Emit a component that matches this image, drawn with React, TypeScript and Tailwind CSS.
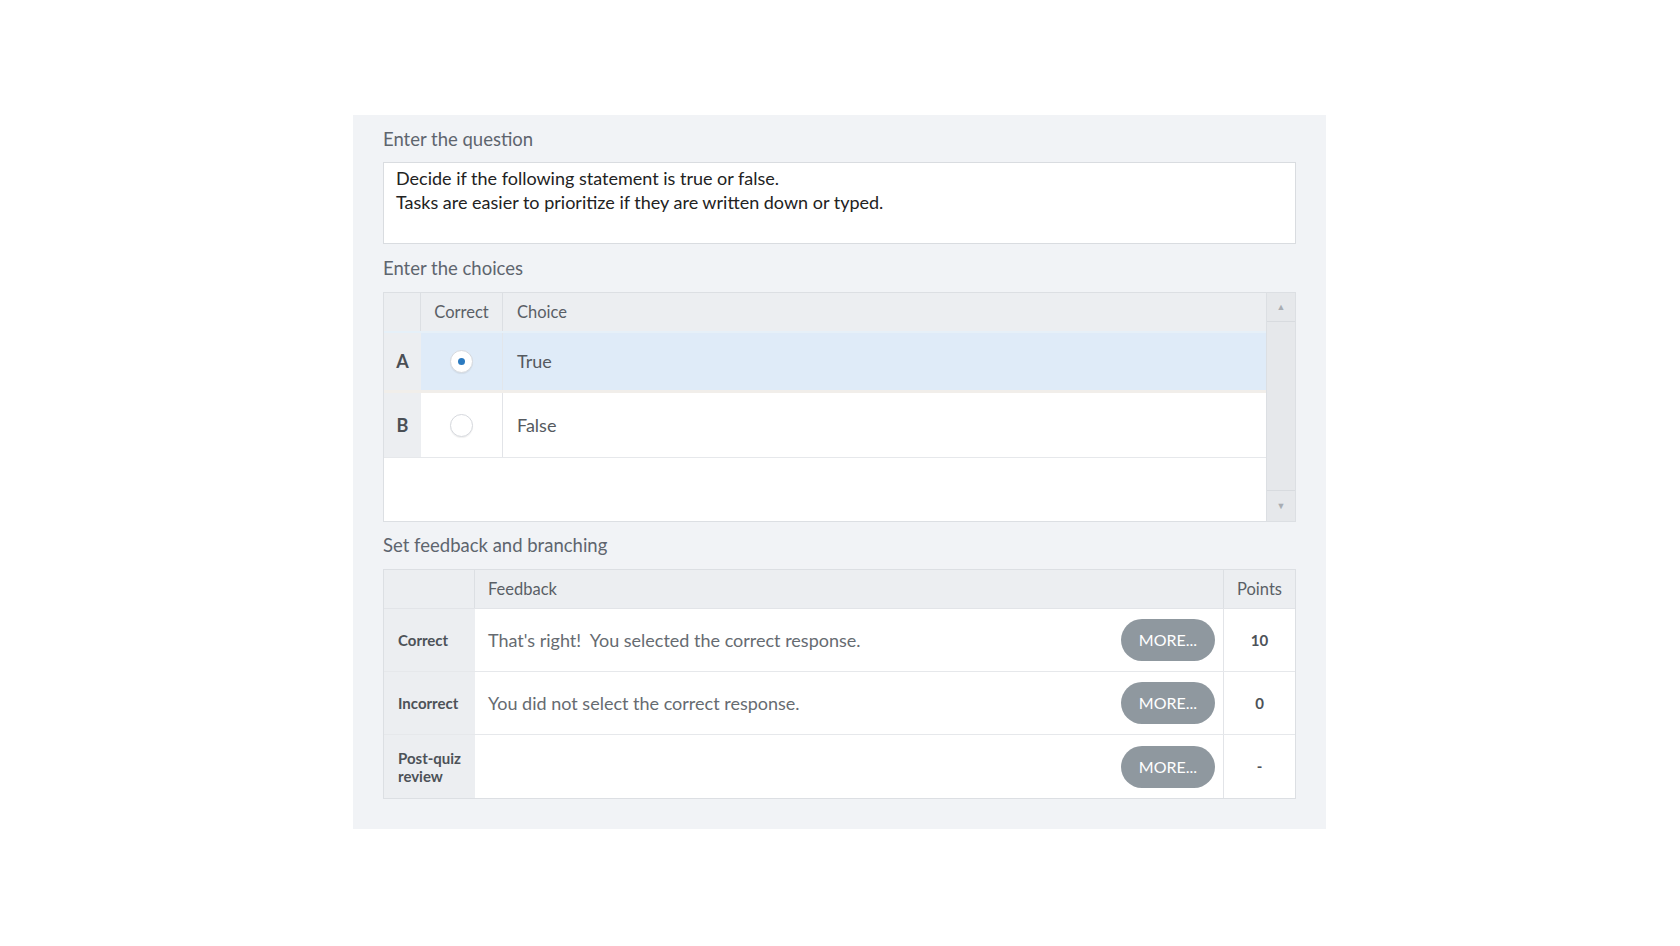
import React from "react";

const font = { fontFamily: "Lato, 'Open Sans', sans-serif" };

const choices = [
  { key: "A", label: "True", selected: true },
  { key: "B", label: "False", selected: false },
];

const feedback = [
  { label: "Correct", text: "That's right!\u00a0 You selected the correct response.", points: "10" },
  { label: "Incorrect", text: "You did not select the correct response.", points: "0" },
  { label: "Post-quiz review", text: "", points: "-" },
];

function Radio({ on }: { on: boolean }) {
  return (
    <span className="grid h-[23px] w-[23px] place-items-center rounded-full border border-[#d6d9de] bg-white shadow-[0_1px_1px_rgba(0,0,0,0.06)]">
      {on && <span className="h-[7px] w-[7px] rounded-full bg-[#2b7ac0]" />}
    </span>
  );
}

export default function App() {
  return (
    <div className="min-h-screen bg-white pl-[353px] pt-[115px]" style={font}>
      <div className="h-[714px] w-[973px] bg-[#f1f3f6] px-[30px] pt-[12px]">
        <div className="h-[24px] text-[18.5px] leading-[24px] text-[#5e656e]">Enter the question</div>
        <div className="mt-[11px] h-[82px] border border-[#d9dce0] bg-white px-[12px] pt-[3px] text-[18px] leading-[24px] text-[#222]">
          <div>Decide if the following statement is true or false.</div>
          <div>Tasks are easier to prioritize if they are written down or typed.</div>
        </div>

        <div className="mt-[12px] h-[24px] text-[18.5px] leading-[24px] text-[#5e656e]">Enter the choices</div>
        <div className="mt-[12px] flex h-[230px] border border-[#dcdfe3] bg-white">
          <div className="flex flex-1 flex-col">
            <div className="flex h-[40px] border-b-[2px] border-[#e6f0f8] bg-[#eceef1] text-[16.5px] text-[#5a5f66]">
              <div className="w-[37px] border-r border-[#dcdfe3]" />
              <div className="flex w-[82px] items-center justify-center border-r border-[#dcdfe3]">Correct</div>
              <div className="flex items-center pl-[14px]">Choice</div>
            </div>
            <div className="flex h-[60px] border-b-[3px] border-[#f1eeea] bg-[#dfebf8] text-[18px] text-[#555a60]">
              <div className="flex w-[37px] items-center justify-center bg-[#eceef1] font-bold text-[#4a4f55]">A</div>
              <div className="flex w-[82px] items-center justify-center border-r border-[#e2e6eb]">
                <Radio on={true} />
              </div>
              <div className="flex items-center pl-[14px]">{choices[0].label}</div>
            </div>
            <div className="flex h-[65px] border-b border-[#e6e8eb] bg-white text-[18px] text-[#555a60]">
              <div className="flex w-[37px] items-center justify-center bg-[#eceef1] font-bold text-[#4a4f55]">B</div>
              <div className="flex w-[82px] items-center justify-center border-r border-[#e2e4e8]">
                <Radio on={false} />
              </div>
              <div className="flex items-center pl-[14px]">{choices[1].label}</div>
            </div>
            <div className="flex-1" />
          </div>
          <div className="flex w-[29px] flex-col border-l border-[#dcdfe3] bg-[#e6e8eb]">
            <div className="flex h-[29px] items-center justify-center border-b border-[#d8dbdf] text-[9px] text-[#a9adb3]">▲</div>
            <div className="flex-1" />
            <div className="flex h-[31px] items-center justify-center border-t border-[#d8dbdf] text-[9px] text-[#a9adb3]">▼</div>
          </div>
        </div>

        <div className="mt-[11px] h-[24px] text-[18.5px] leading-[24px] text-[#5e656e]">Set feedback and branching</div>
        <div className="mt-[12px] border border-[#dcdfe3] bg-white">
          <div className="flex h-[39px] border-b border-[#e2e4e8] bg-[#eceef1] text-[16.5px] text-[#5a5f66]">
            <div className="w-[91px] border-r border-[#dcdfe3]" />
            <div className="flex flex-1 items-center pl-[13px]">Feedback</div>
            <div className="flex w-[72px] items-center justify-center border-l border-[#dcdfe3]">Points</div>
          </div>
          {feedback.map((f, i) => (
            <div key={f.label} className={`flex h-[63px] ${i < feedback.length - 1 ? "border-b border-[#e6e8eb]" : ""}`}>
              <div className="flex w-[91px] items-center bg-[#eceef1] pl-[14px] text-[15px] font-bold leading-[18px] text-[#4d5258]">
                {f.label === "Post-quiz review" ? (
                  <span>
                    Post-quiz
                    <br />
                    review
                  </span>
                ) : (
                  f.label
                )}
              </div>
              <div className="flex flex-1 items-center justify-between pl-[13px] pr-[8px] text-[18px] text-[#666b71]">
                <span>{f.text}</span>
                <button className="h-[42px] w-[94px] rounded-full bg-[#8f989f] text-[16px] text-white">MORE...</button>
              </div>
              <div className="flex w-[72px] items-center justify-center border-l border-[#e2e4e8] text-[15px] font-bold text-[#4d5258]">
                {f.points}
              </div>
            </div>
          ))}
        </div>
      </div>
    </div>
  );
}
